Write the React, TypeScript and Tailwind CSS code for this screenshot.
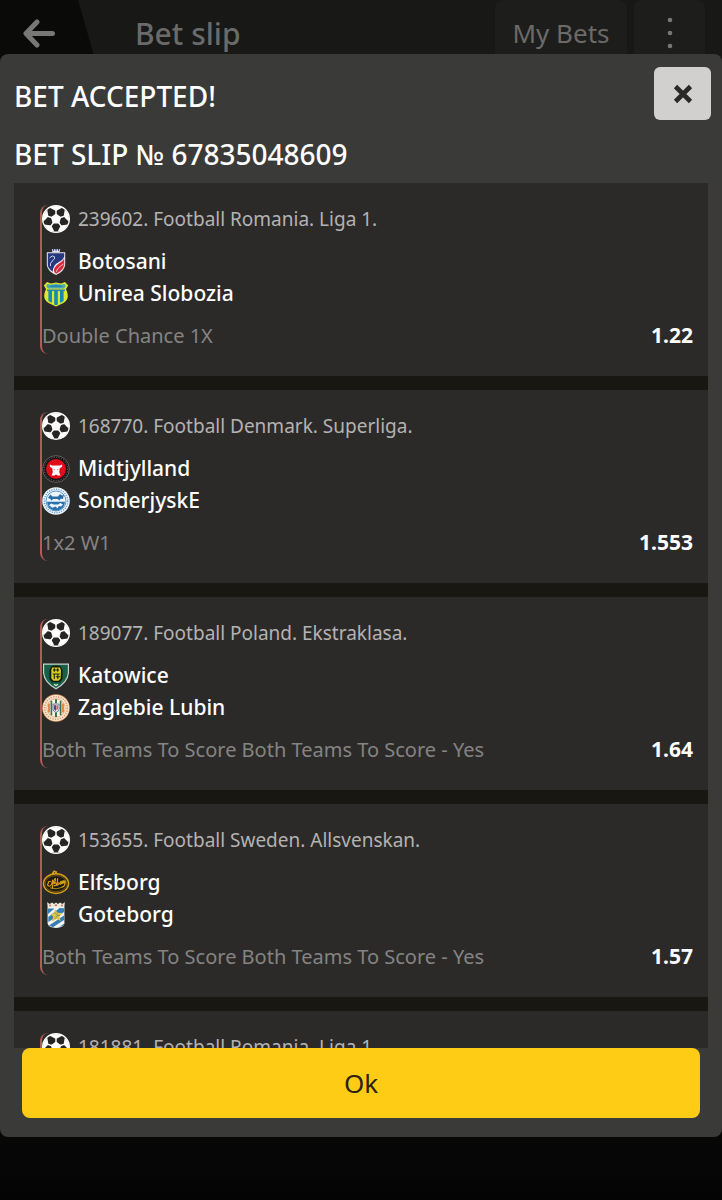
/**
 * BetAcceptedPage - Accepted bet slip dialog on top of the bet slip screen.
 */

import React from 'react';

interface Selection {
  /** Event number and competition */
  event: string;
  home: string;
  away: string;
  homeCrest: React.ReactNode;
  awayCrest: React.ReactNode;
  market: string;
  odds: string;
}

const FootballIcon = () => (
  <svg viewBox="0 0 28 28" className="size-7 shrink-0" aria-hidden="true">
    <circle cx="14" cy="14" r="13.3" fill="#262524" stroke="#fff" strokeWidth="1.4" />
    {[0, 72, 144, 216, 288].map((angle) => (
      <g key={angle} transform={`rotate(${angle} 14 14)`}>
        <path d="M14 10V4" stroke="#fff" strokeWidth="1.4" />
        <path d="M14 6L7.8 2.8Q14 -1 20.2 2.8Z" fill="#fff" />
      </g>
    ))}
    <path d="M14 8.5L19.2 12.3L17.2 18.4H10.8L8.8 12.3Z" fill="#fff" />
  </svg>
);

interface CrestProps {
  children: React.ReactNode;
}

const Crest: React.FC<CrestProps> = ({ children }) => (
  <svg viewBox="0 0 28 28" className="size-7 shrink-0" aria-hidden="true">
    {children}
  </svg>
);

const botosaniCrest = (
  <Crest>
    <path d="M9.8 1.2H18.2L17.6 4.2H10.4Z" fill="#dfe3f2" />
    <path d="M11.4 1V3M14 1V3M16.6 1V3" stroke="#2a3474" strokeWidth="0.9" />
    <path d="M4.8 4.3H23.2V17Q22.2 23.5 14 27Q5.8 23.5 4.8 17Z" fill="#eceaf3" />
    <path d="M5.8 5.3H22.2V8.5Q21 12 16.5 14.2Q10.5 17.5 10.8 23.8Q5.8 20.5 5.8 16.5Z" fill="#27377d" />
    <path d="M22.2 10.5V17Q21 22.5 14 25.8Q10.8 23.5 12.6 19.8Q14.5 16.8 18 14.8Q21 13.2 22.2 10.5Z" fill="#d92a3b" />
    <path d="M14.5 23.8Q14.5 20.5 21.4 16" fill="none" stroke="#f4e8f0" strokeWidth="0.8" />
    <path d="M7.6 9.8Q10.5 6.6 12.6 8.8Q13.4 11 10 13.2Q8 15 8.4 18" fill="none" stroke="#cfd3ea" strokeWidth="1" />
  </Crest>
);

const unireaCrest = (
  <Crest>
    <path d="M5 2L9 3.5L14 2.5L19 3.5L23 2L26.2 5.5L24 9Q28.3 18.5 22 22.5L14 26.5L6 22.5Q-0.3 18.5 4 9L1.8 5.5Z" fill="#d9e92c" />
    <path d="M5.5 4L9 4.8L14 3.8L19 4.8L22.5 4L23.8 6L22 8.5H6L4.2 6Z" fill="#4ba8b7" />
    <path d="M5 10.2H23M8 6.3H20" stroke="#2584a8" strokeWidth="1.4" />
    <path d="M6.4 11H10V23L6.4 21ZM12.2 11H15.8V25L14 26L12.2 25ZM18 11H21.6V21L18 23Z" fill="#1689b5" />
    <path d="M4.8 9.5Q1 18 6 22L14 25.8L22 22Q27 18 23.2 9.5" fill="none" stroke="#d9e92c" strokeWidth="1" />
  </Crest>
);

const midtjyllandCrest = (
  <Crest>
    <circle cx="14" cy="14" r="13.4" fill="#171516" stroke="#77706e" strokeWidth="0.8" />
    <circle cx="14" cy="14" r="11.7" fill="none" stroke="#8a8381" strokeWidth="0.9" strokeDasharray="1 1.5" />
    <circle cx="14" cy="14" r="10" fill="#e00c1b" />
    <path d="M8 9.2Q8.4 10.8 11 10.6H17Q19.6 10.8 20 9.2Q20.8 12 18.6 12.8L17.8 13L17.2 17L18.4 20.6H15.6L14 19.4L12.4 20.6H9.6L10.8 17L10.2 13L9.4 12.8Q7.2 12 8 9.2Z" fill="#fff" />
    <path d="M11.6 14L12.4 14.8M16.4 14L15.6 14.8" stroke="#e00c1b" strokeWidth="0.8" />
  </Crest>
);

const sonderjyskeCrest = (
  <Crest>
    <circle cx="14" cy="14" r="13.8" fill="#f1f6fa" />
    <circle cx="14" cy="14" r="11.8" fill="none" stroke="#6d9fc8" strokeWidth="1.5" strokeDasharray="1.2 1.2" />
    <circle cx="14" cy="14" r="10" fill="#eef5fa" stroke="#367fb8" strokeWidth="0.8" />
    <path d="M5 14.8H23Q22.5 23 14 23.7Q5.5 23 5 14.8Z" fill="#2871ae" />
    <path d="M6 11L8.3 7.5L10.5 9.4H16L18 7L20 8.4L21.8 7.7L21 12L18.5 11.7L17.6 13.5L15.5 12L11 12.1L9.5 13.7L8.5 12Z" fill="#286ca8" />
    <path d="M7 18.2L9.2 16.5L11.5 17.6H16L18.3 16L21 17.4L19 19.4L16.8 19.1L15.5 21.5L13.7 19.5L10.3 20.8Z" fill="#edf5fa" />
  </Crest>
);

const katowiceCrest = (
  <Crest>
    <path d="M1 1.5H27V11Q26 21 14 27.5Q2 21 1 11Z" fill="#c9d3c8" />
    <path d="M2.2 2.7H25.8V11Q25 20 14 26Q3 20 2.2 11Z" fill="#176047" />
    <path d="M9.5 4.2L14 3.5L18.5 4.2L20.5 8V17L17.8 20.3H10.2L7.5 17V8Z" fill="#11190b" />
    <path d="M10 5.5H18L19 8.5L18.6 16.7L16.5 18.7H11.4L9.3 16.5V8.2Z" fill="#d8cd25" />
    <path d="M11 8H17M12.3 6.2V9.8M15.7 6.2V9.8M10.7 12H17.7M12.3 12V17M15.8 12V17M13.8 14.8H18.2" stroke="#202510" strokeWidth="1.1" />
    <path d="M12 22.3L14 23.5L16 22.3" stroke="#e7eee1" strokeWidth="1.2" fill="none" />
  </Crest>
);

const zaglebieCrest = (
  <Crest>
    <circle cx="14" cy="14" r="13.8" fill="#e99c62" />
    <circle cx="14" cy="14" r="13" fill="#f7ead8" />
    <circle cx="14" cy="14" r="11.3" fill="none" stroke="#d99b6c" strokeWidth="1.6" strokeDasharray="1.3 1.2" />
    <circle cx="14" cy="14" r="9.2" fill="#fff7e9" stroke="#e29a65" strokeWidth="0.8" />
    <path d="M7 9.5V18.5M21 9.5V18.5" stroke="#e28b46" strokeWidth="2" />
    <path d="M9.4 6.8V21.2M18.6 6.8V21.2" stroke="#39754d" strokeWidth="1.7" />
    <path d="M14 5.2V9.3M14 18.2V23" stroke="#39754d" strokeWidth="2" />
    <path d="M11 10H17V15.5Q17 17.3 14 18.5Q11 17.3 11 15.5Z" fill="#eee7ef" stroke="#4f6389" strokeWidth="0.8" />
    <path d="M12 11.2H14V17L12 15.5Z" fill="#454b88" />
    <path d="M14.3 11.2H16V15L14.3 16.5Z" fill="#c26c66" />
  </Crest>
);

const elfsborgCrest = (
  <Crest>
    <path d="M10.5 3L12 1.2L13.5 2L15.2 2.5L14.2 6.5H11L9.8 5Z" fill="#dda51c" />
    <path d="M12 3L13.2 4L12.3 5.3" stroke="#2a2215" strokeWidth="0.8" fill="none" />
    <ellipse cx="14" cy="14.6" rx="12.5" ry="9.8" fill="#2a2113" stroke="#d99f18" strokeWidth="1.5" />
    <ellipse cx="14" cy="14.6" rx="10.8" ry="8" fill="#1b1913" stroke="#a57916" strokeWidth="0.6" />
    <path d="M8.5 12.2Q5.5 12.2 6.5 14Q4.2 16.4 7.5 17.2Q10 16.5 10.5 11M10.3 19.5Q11 11.3 13.2 9.4Q14.6 10.2 11.8 14.4Q14.5 13 14.4 15.2Q13.2 18 12.2 16.3M15.7 9.5L15 16.3Q18 15.7 16.7 13.6M19 12.3Q17 14.5 18.7 15.3Q20.6 13.3 19 12.3M20.3 14.5L21 11.6M22 12Q20.7 14 22.4 14.1L23.2 11.3Q23.5 18 20 18" fill="none" stroke="#e0a61b" strokeWidth="1.1" strokeLinecap="round" />
    <path d="M8 18.8Q14 21 20.5 18.3" stroke="#dba01a" strokeWidth="0.8" fill="none" />
  </Crest>
);

const goteborgCrest = (
  <Crest>
    <path d="M5.2 1L7.5 3L10.2 1.5L12 3L14 1.5L16 3L18 1.5L20.5 3L22.8 1L22.3 7H5.7Z" fill="#eee9db" />
    <path d="M7.2 4.5H9M12.8 4.2H15M19 4.5H20.8" stroke="#ba6658" strokeWidth="1.4" />
    <path d="M5.6 6.5H22.4V22.5Q21.8 26.5 14 27Q6.2 26.5 5.6 22.5Z" fill="#f4f5f1" />
    <path d="M6 7.5H12.5L6 13ZM17.5 7L22 7.2V11L6.3 21V16ZM22 14.5V19L11 26.3L7 24.5ZM22 22.8V24.6L17 26.2Z" fill="#347eb5" />
    <path d="M13 8L15.5 11.7L20.5 12L17.3 15.4L18.7 20L14.8 18L9.5 20.5L11.3 16L8.5 13L12 12.3Z" fill="#dac44f" />
    <path d="M13 11.5L15.5 14.4L13.2 17.5M15.5 14.4H18" stroke="#8c863f" strokeWidth="0.9" fill="none" />
  </Crest>
);

const selections: Selection[] = [
  {
    event: '239602. Football Romania. Liga 1.',
    home: 'Botosani',
    away: 'Unirea Slobozia',
    homeCrest: botosaniCrest,
    awayCrest: unireaCrest,
    market: 'Double Chance 1X',
    odds: '1.22',
  },
  {
    event: '168770. Football Denmark. Superliga.',
    home: 'Midtjylland',
    away: 'SonderjyskE',
    homeCrest: midtjyllandCrest,
    awayCrest: sonderjyskeCrest,
    market: '1x2 W1',
    odds: '1.553',
  },
  {
    event: '189077. Football Poland. Ekstraklasa.',
    home: 'Katowice',
    away: 'Zaglebie Lubin',
    homeCrest: katowiceCrest,
    awayCrest: zaglebieCrest,
    market: 'Both Teams To Score Both Teams To Score - Yes',
    odds: '1.64',
  },
  {
    event: '153655. Football Sweden. Allsvenskan.',
    home: 'Elfsborg',
    away: 'Goteborg',
    homeCrest: elfsborgCrest,
    awayCrest: goteborgCrest,
    market: 'Both Teams To Score Both Teams To Score - Yes',
    odds: '1.57',
  },
];

const EventRow = ({ event }: { event: string }) => (
  <div className="flex h-7 items-center gap-2 text-[19px] text-[#b4b3b2]">
    <FootballIcon />
    <span className="whitespace-nowrap">{event}</span>
  </div>
);

const SelectionCard: React.FC<{ selection: Selection }> = ({ selection }) => (
  <li className="bg-[#2b2a29] py-[22px] pr-[15px] pl-[26px]">
    <div className="rounded-l-lg border-l-2 border-[#b25b59] pb-1">
      <EventRow event={selection.event} />
      <div className="mt-[13px] text-[21px] font-medium text-white">
        <div className="flex h-8 items-center gap-2">
          {selection.homeCrest}
          <span>{selection.home}</span>
        </div>
        <div className="flex h-8 items-center gap-2">
          {selection.awayCrest}
          <span>{selection.away}</span>
        </div>
      </div>
      <div className="mt-3 flex h-7 items-center justify-between text-[20px]">
        <span className="text-[#858483]">{selection.market}</span>
        <span className="text-[21px] font-bold text-white">{selection.odds}</span>
      </div>
    </div>
  </li>
);

const SlipHeader = () => (
  <header className="flex h-[66px] shrink-0 items-center bg-[#181817] text-[#6a6a69]">
    <button
      type="button"
      aria-label="Back"
      className="flex h-full w-[97px] items-center bg-[#0a0a09] pl-[22px] [clip-path:polygon(0_0,78px_0,100%_100%,0_100%)]"
    >
      <svg viewBox="0 0 34 30" className="h-[30px] w-[34px]" aria-hidden="true">
        <path
          d="M15 4L4 15.5L15 27M4.5 15.5H30.5"
          fill="none"
          stroke="#777776"
          strokeWidth="5"
          strokeLinecap="round"
          strokeLinejoin="round"
        />
      </svg>
    </button>
    <div className="ml-[38px] flex-1 text-[30px] font-medium">Bet slip</div>
    <button type="button" className="h-full w-[132px] rounded-lg bg-[#1d1d1c] text-[26px]">
      My Bets
    </button>
    <button
      type="button"
      aria-label="More"
      className="mr-[17px] ml-[7px] flex h-full w-[71px] items-center justify-center rounded-lg bg-[#1d1d1c]"
    >
      <svg viewBox="0 0 6 32" className="h-8 w-1.5" fill="#777776" aria-hidden="true">
        <circle cx="3" cy="3" r="2.3" />
        <circle cx="3" cy="16" r="2.3" />
        <circle cx="3" cy="29" r="2.3" />
      </svg>
    </button>
  </header>
);

const App: React.FC = () => {
  return (
    <div className="flex h-screen flex-col bg-[#070706] bg-linear-to-t from-[#040404] to-[#0c0c0b] to-10% pb-[63px] font-['Noto_Sans',sans-serif]">
      <SlipHeader />

      <section
        role="dialog"
        aria-labelledby="dialog-title"
        className="relative -mt-3 flex min-h-0 flex-1 flex-col rounded-lg bg-[#3a3a38] px-[14px] pt-[13px] pb-[19px]"
      >
        <div className="-mr-[3px] flex items-start justify-between text-[28px] font-medium text-white">
          <div>
            <h1 id="dialog-title" className="leading-[58px]">BET ACCEPTED!</h1>
            <h2 className="leading-[58px]">BET SLIP № 67835048609</h2>
          </div>
          <button
            type="button"
            aria-label="Close"
            className="flex h-[53px] w-[57px] items-center justify-center rounded-md bg-[#d1d0cf]"
          >
            <svg viewBox="0 0 20 20" className="size-5" aria-hidden="true">
              <path d="M2.5 2.5L17.5 17.5M17.5 2.5L2.5 17.5" stroke="#2a2928" strokeWidth="4.6" />
            </svg>
          </button>
        </div>

        <ul className="flex min-h-0 flex-1 flex-col gap-[14px] overflow-y-auto bg-[#181712] [scrollbar-width:none]">
          {selections.map((selection) => (
            <SelectionCard key={selection.event} selection={selection} />
          ))}
          <li className="bg-[#2b2a29] pt-[22px] pr-[15px] pl-[26px]">
            <div className="rounded-tl-lg border-l-2 border-[#b25b59]">
              <EventRow event="181881. Football Romania. Liga 1." />
            </div>
          </li>
        </ul>

        <button type="button" className="mx-2 h-[70px] shrink-0 rounded-lg bg-[#ffcc15] text-[26px] text-[#2b2210]">
          Ok
        </button>
      </section>
    </div>
  );
};

export default App;
